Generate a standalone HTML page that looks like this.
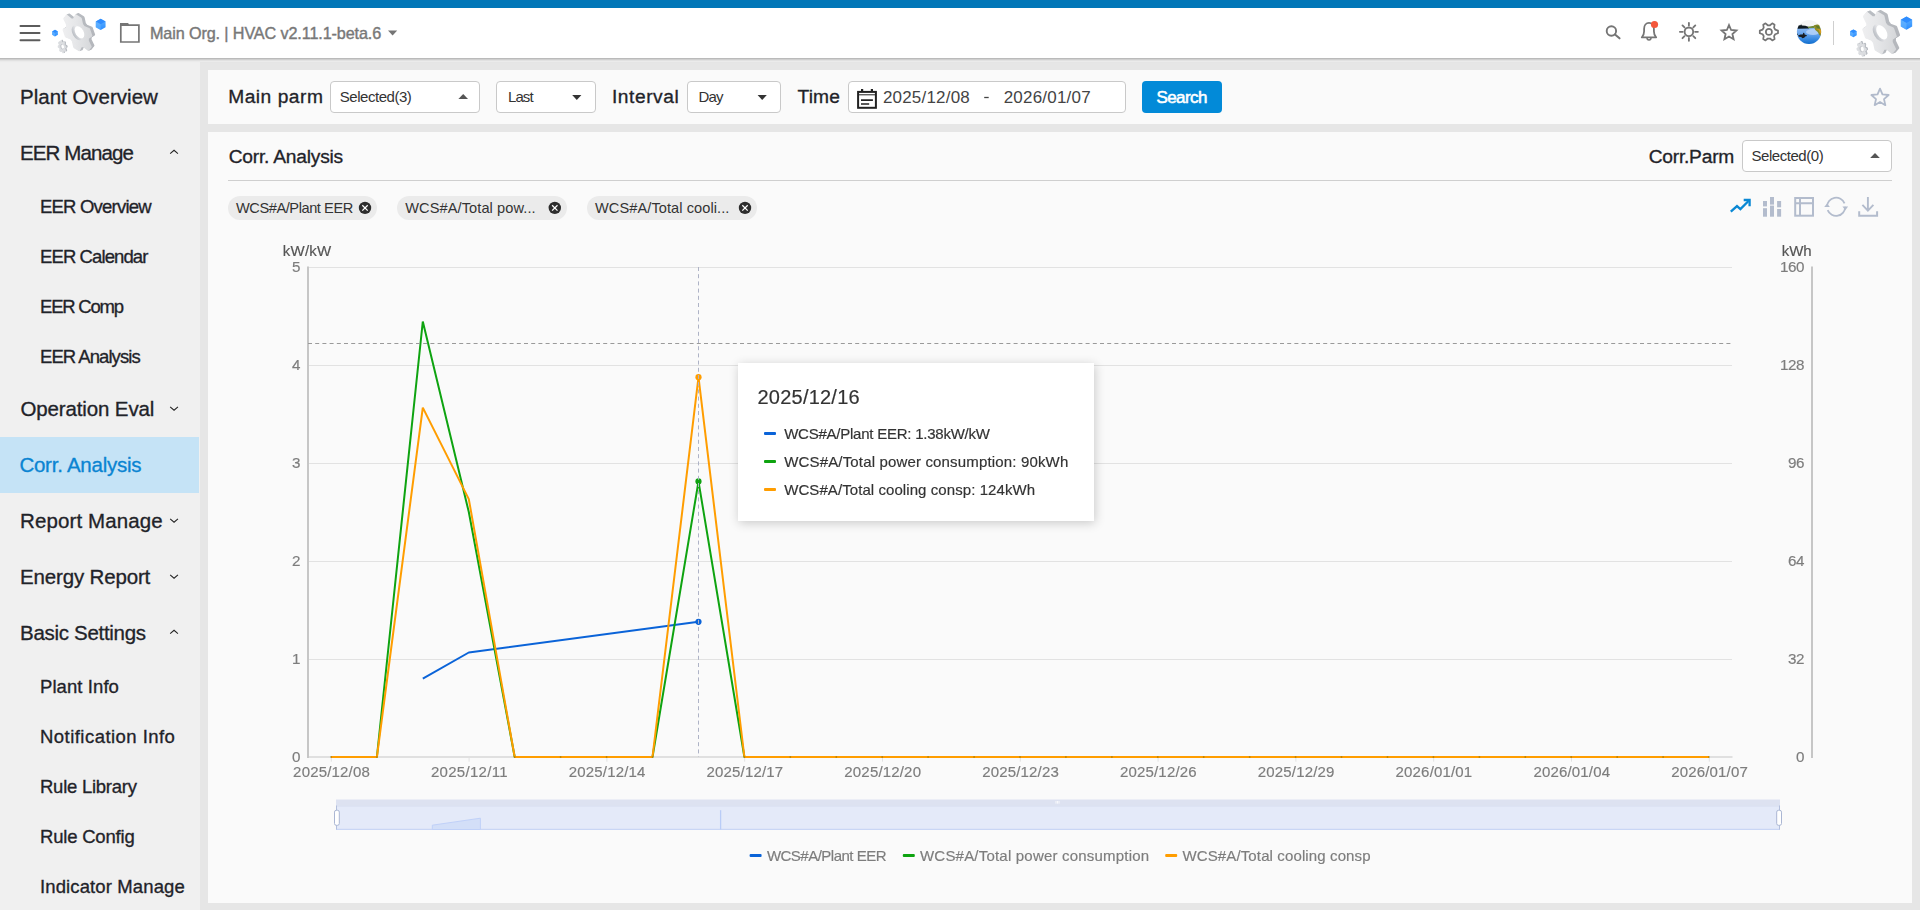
<!DOCTYPE html>
<html lang="en"><head><meta charset="utf-8"><title>HVAC - Corr. Analysis</title>
<style>
*{box-sizing:border-box;margin:0;padding:0}
html,body{width:1920px;height:910px;overflow:hidden}
body{position:relative;background:#f0f0f0;font-family:"Liberation Sans",sans-serif}
.a{position:absolute}
.t{position:absolute;white-space:pre;line-height:1;font-family:"Liberation Sans",sans-serif}
#topbar{left:0;top:0;width:1920px;height:8px;background:#0277b8}
#header{left:-10px;top:8px;width:1940px;height:50px;background:#fff;box-shadow:0 1px 3px rgba(0,0,0,.36)}
#sidebar{left:0;top:60px;width:200px;height:850px;background:#f0f0f0}
#main{left:200px;top:62px;width:1720px;height:848px;background:#e6e6e6}
#sel{left:0;top:437px;width:199px;height:56px;background:#c5e3f6}
.panel{background:#fafafa}
#filter{left:208px;top:70px;width:1704px;height:54px}
#chartp{left:208px;top:132px;width:1704px;height:771px}
.box{background:#fff;border:1px solid #c9c9c9;border-radius:4px}
#btn{left:1142px;top:81px;width:80px;height:32px;background:#028ad8;border-radius:4px}
#hr{left:228px;top:180px;width:1664px;height:1px;background:#cfcfcf}
.chip{height:24px;top:196px;border-radius:12px;background:#ebebeb}
#tip{left:738px;top:363px;width:356px;height:158px;background:#fff;box-shadow:1px 2px 10px rgba(0,0,0,.2)}
svg{position:absolute;overflow:visible}
#ctexts{position:absolute;left:0;top:0;width:1920px;height:910px;will-change:transform;pointer-events:none}

</style></head>
<body>
<div class="a" id="sidebar"></div>
<div class="a" id="main"></div>
<div class="a" id="sel"></div>
<div class="a" id="header"></div>
<div class="a" id="topbar"></div>
<div class="a panel" id="filter"></div>
<div class="a panel" id="chartp"></div>
<svg style="left:0;top:0" width="1920" height="62" viewBox="0 0 1920 62" fill="none">
<defs>
<linearGradient id="gg" x1="0" y1="0" x2="1" y2="1"><stop offset="0" stop-color="#f3f3f4"/><stop offset=".45" stop-color="#e6e7e9"/><stop offset="1" stop-color="#cfd1d4"/></linearGradient>
<linearGradient id="gs" x1="0" y1="0" x2="1" y2="1"><stop offset="0" stop-color="#bcc1c6"/><stop offset="1" stop-color="#b3b5ba"/></linearGradient>
<linearGradient id="gw" x1="0" y1="0" x2="1" y2="0"><stop offset="0" stop-color="#b9bdc3"/><stop offset=".6" stop-color="#e4e5e8"/><stop offset="1" stop-color="#f4f4f5"/></linearGradient>
<linearGradient id="wat" x1="0" y1="0" x2="0" y2="1"><stop offset="0" stop-color="#8dbaf3"/><stop offset=".35" stop-color="#6aa6ee"/><stop offset=".7" stop-color="#2f84de"/><stop offset="1" stop-color="#0565c6"/></linearGradient>
<linearGradient id="cb" x1="0" y1="0" x2="0" y2="1"><stop offset="0" stop-color="#63b4ff"/><stop offset="1" stop-color="#2a8cff"/></linearGradient>
<clipPath id="avc"><circle cx="1809" cy="32" r="12.100"/></clipPath>
</defs>
<g stroke="#5c5c5c" stroke-width="2" stroke-linecap="round"><path d="M20.500 26H39.500M20.500 33.100H39.500M20.500 40.200H39.500"/></g>
<g transform="translate(78.5 32) scale(0.86)">
<g transform="translate(-1.200 0.900)">
<g transform="translate(3.20 -1.40) matrix(0.530 -0.300 0.500 0.866 0 0)"><path d="M16.98 -1.85 L23.23 2.85 L20.78 10.76 L12.97 11.11 L10.09 13.78 L9.15 21.54 L1.07 23.38 L-3.14 16.79 L-6.89 15.63 L-14.08 18.69 L-19.71 12.61 L-16.11 5.68 L-16.98 1.85 L-23.23 -2.85 L-20.78 -10.76 L-12.97 -11.11 L-10.09 -13.78 L-9.15 -21.54 L-1.07 -23.38 L3.14 -16.79 L6.89 -15.63 L14.08 -18.69 L19.71 -12.61 L16.11 -5.68Z" fill="url(#gs)" stroke="url(#gs)" stroke-width="2.600" stroke-linejoin="round"/></g>
<g transform="translate(2.40 -1.05) matrix(0.530 -0.300 0.500 0.866 0 0)"><path d="M16.98 -1.85 L23.23 2.85 L20.78 10.76 L12.97 11.11 L10.09 13.78 L9.15 21.54 L1.07 23.38 L-3.14 16.79 L-6.89 15.63 L-14.08 18.69 L-19.71 12.61 L-16.11 5.68 L-16.98 1.85 L-23.23 -2.85 L-20.78 -10.76 L-12.97 -11.11 L-10.09 -13.78 L-9.15 -21.54 L-1.07 -23.38 L3.14 -16.79 L6.89 -15.63 L14.08 -18.69 L19.71 -12.61 L16.11 -5.68Z" fill="url(#gs)" stroke="url(#gs)" stroke-width="2.600" stroke-linejoin="round"/></g>
<g transform="translate(1.60 -0.70) matrix(0.530 -0.300 0.500 0.866 0 0)"><path d="M16.98 -1.85 L23.23 2.85 L20.78 10.76 L12.97 11.11 L10.09 13.78 L9.15 21.54 L1.07 23.38 L-3.14 16.79 L-6.89 15.63 L-14.08 18.69 L-19.71 12.61 L-16.11 5.68 L-16.98 1.85 L-23.23 -2.85 L-20.78 -10.76 L-12.97 -11.11 L-10.09 -13.78 L-9.15 -21.54 L-1.07 -23.38 L3.14 -16.79 L6.89 -15.63 L14.08 -18.69 L19.71 -12.61 L16.11 -5.68Z" fill="url(#gs)" stroke="url(#gs)" stroke-width="2.600" stroke-linejoin="round"/></g>
<g transform="translate(0.80 -0.35) matrix(0.530 -0.300 0.500 0.866 0 0)"><path d="M16.98 -1.85 L23.23 2.85 L20.78 10.76 L12.97 11.11 L10.09 13.78 L9.15 21.54 L1.07 23.38 L-3.14 16.79 L-6.89 15.63 L-14.08 18.69 L-19.71 12.61 L-16.11 5.68 L-16.98 1.85 L-23.23 -2.85 L-20.78 -10.76 L-12.97 -11.11 L-10.09 -13.78 L-9.15 -21.54 L-1.07 -23.38 L3.14 -16.79 L6.89 -15.63 L14.08 -18.69 L19.71 -12.61 L16.11 -5.68Z" fill="url(#gs)" stroke="url(#gs)" stroke-width="2.600" stroke-linejoin="round"/></g>
<g transform="matrix(0.530 -0.300 0.500 0.866 0 0)"><path d="M16.98 -1.85 L23.23 2.85 L20.78 10.76 L12.97 11.11 L10.09 13.78 L9.15 21.54 L1.07 23.38 L-3.14 16.79 L-6.89 15.63 L-14.08 18.69 L-19.71 12.61 L-16.11 5.68 L-16.98 1.85 L-23.23 -2.85 L-20.78 -10.76 L-12.97 -11.11 L-10.09 -13.78 L-9.15 -21.54 L-1.07 -23.38 L3.14 -16.79 L6.89 -15.63 L14.08 -18.69 L19.71 -12.61 L16.11 -5.68Z" fill="url(#gg)" stroke="url(#gg)" stroke-width="2.600" stroke-linejoin="round"/><circle r="9.36" fill="url(#gw)"/></g>
<g transform="translate(2.300 -0.600) matrix(0.530 -0.300 0.500 0.866 0 0)"><circle r="7.72" fill="#fff"/></g>
</g>
<g transform="translate(-19.100 17.200)"><g transform="translate(1.300 -0.500) matrix(0.660 -0.220 0.300 1.050 0 0)"><path d="M4.78 -0.45 L6.57 0.67 L6.31 1.94 L4.22 2.28 L3.70 3.06 L4.17 5.12 L3.09 5.83 L1.38 4.60 L0.45 4.78 L-0.67 6.57 L-1.94 6.31 L-2.28 4.22 L-3.06 3.70 L-5.12 4.17 L-5.83 3.09 L-4.60 1.38 L-4.78 0.45 L-6.57 -0.67 L-6.31 -1.94 L-4.22 -2.28 L-3.70 -3.06 L-4.17 -5.12 L-3.09 -5.83 L-1.38 -4.60 L-0.45 -4.78 L0.67 -6.57 L1.94 -6.31 L2.28 -4.22 L3.06 -3.70 L5.12 -4.17 L5.83 -3.09 L4.60 -1.38Z" fill="#b4b8be" stroke="#b4b8be" stroke-width="1" stroke-linejoin="round"/></g><g transform="matrix(0.660 -0.220 0.300 1.050 0 0)"><path d="M4.78 -0.45 L6.57 0.67 L6.31 1.94 L4.22 2.28 L3.70 3.06 L4.17 5.12 L3.09 5.83 L1.38 4.60 L0.45 4.78 L-0.67 6.57 L-1.94 6.31 L-2.28 4.22 L-3.06 3.70 L-5.12 4.17 L-5.83 3.09 L-4.60 1.38 L-4.78 0.45 L-6.57 -0.67 L-6.31 -1.94 L-4.22 -2.28 L-3.70 -3.06 L-4.17 -5.12 L-3.09 -5.83 L-1.38 -4.60 L-0.45 -4.78 L0.67 -6.57 L1.94 -6.31 L2.28 -4.22 L3.06 -3.70 L5.12 -4.17 L5.83 -3.09 L4.60 -1.38Z" fill="#dcdee1" stroke="#dcdee1" stroke-width="1" stroke-linejoin="round"/><circle r="2.900" fill="#c3c6cb"/></g><g transform="translate(.700 -.2) matrix(0.660 -0.220 0.300 1.050 0 0)"><circle r="2.200" fill="#fff"/></g></g>
<g transform="translate(-27.3 1.3)"><path d="M0 -3.9L3.35 -1.95V1.95L0 3.9L-3.35 1.95V-1.95Z" fill="url(#cb)"/><path d="M0 -3.9L3.35 -1.95L0 0L-3.35 -1.95Z" fill="#2f8dff"/><path d="M0 0V3.9L-3.35 1.95V-1.95Z" fill="#6cb8ff" opacity=".550"/></g>
<g transform="translate(25.8 -8.9)"><path d="M0 -6.6L5.68 -3.30V3.30L0 6.6L-5.68 3.30V-3.30Z" fill="url(#cb)"/><path d="M0 -6.6L5.68 -3.30L0 0L-5.68 -3.30Z" fill="#2f8dff"/><path d="M0 0V6.6L-5.68 3.30V-3.30Z" fill="#6cb8ff" opacity=".550"/></g>
</g>
<g transform="translate(1880.7 32) scale(1.0)">
<g transform="translate(-1.200 0.900)">
<g transform="translate(3.20 -1.40) matrix(0.530 -0.300 0.500 0.866 0 0)"><path d="M16.98 -1.85 L23.23 2.85 L20.78 10.76 L12.97 11.11 L10.09 13.78 L9.15 21.54 L1.07 23.38 L-3.14 16.79 L-6.89 15.63 L-14.08 18.69 L-19.71 12.61 L-16.11 5.68 L-16.98 1.85 L-23.23 -2.85 L-20.78 -10.76 L-12.97 -11.11 L-10.09 -13.78 L-9.15 -21.54 L-1.07 -23.38 L3.14 -16.79 L6.89 -15.63 L14.08 -18.69 L19.71 -12.61 L16.11 -5.68Z" fill="url(#gs)" stroke="url(#gs)" stroke-width="2.600" stroke-linejoin="round"/></g>
<g transform="translate(2.40 -1.05) matrix(0.530 -0.300 0.500 0.866 0 0)"><path d="M16.98 -1.85 L23.23 2.85 L20.78 10.76 L12.97 11.11 L10.09 13.78 L9.15 21.54 L1.07 23.38 L-3.14 16.79 L-6.89 15.63 L-14.08 18.69 L-19.71 12.61 L-16.11 5.68 L-16.98 1.85 L-23.23 -2.85 L-20.78 -10.76 L-12.97 -11.11 L-10.09 -13.78 L-9.15 -21.54 L-1.07 -23.38 L3.14 -16.79 L6.89 -15.63 L14.08 -18.69 L19.71 -12.61 L16.11 -5.68Z" fill="url(#gs)" stroke="url(#gs)" stroke-width="2.600" stroke-linejoin="round"/></g>
<g transform="translate(1.60 -0.70) matrix(0.530 -0.300 0.500 0.866 0 0)"><path d="M16.98 -1.85 L23.23 2.85 L20.78 10.76 L12.97 11.11 L10.09 13.78 L9.15 21.54 L1.07 23.38 L-3.14 16.79 L-6.89 15.63 L-14.08 18.69 L-19.71 12.61 L-16.11 5.68 L-16.98 1.85 L-23.23 -2.85 L-20.78 -10.76 L-12.97 -11.11 L-10.09 -13.78 L-9.15 -21.54 L-1.07 -23.38 L3.14 -16.79 L6.89 -15.63 L14.08 -18.69 L19.71 -12.61 L16.11 -5.68Z" fill="url(#gs)" stroke="url(#gs)" stroke-width="2.600" stroke-linejoin="round"/></g>
<g transform="translate(0.80 -0.35) matrix(0.530 -0.300 0.500 0.866 0 0)"><path d="M16.98 -1.85 L23.23 2.85 L20.78 10.76 L12.97 11.11 L10.09 13.78 L9.15 21.54 L1.07 23.38 L-3.14 16.79 L-6.89 15.63 L-14.08 18.69 L-19.71 12.61 L-16.11 5.68 L-16.98 1.85 L-23.23 -2.85 L-20.78 -10.76 L-12.97 -11.11 L-10.09 -13.78 L-9.15 -21.54 L-1.07 -23.38 L3.14 -16.79 L6.89 -15.63 L14.08 -18.69 L19.71 -12.61 L16.11 -5.68Z" fill="url(#gs)" stroke="url(#gs)" stroke-width="2.600" stroke-linejoin="round"/></g>
<g transform="matrix(0.530 -0.300 0.500 0.866 0 0)"><path d="M16.98 -1.85 L23.23 2.85 L20.78 10.76 L12.97 11.11 L10.09 13.78 L9.15 21.54 L1.07 23.38 L-3.14 16.79 L-6.89 15.63 L-14.08 18.69 L-19.71 12.61 L-16.11 5.68 L-16.98 1.85 L-23.23 -2.85 L-20.78 -10.76 L-12.97 -11.11 L-10.09 -13.78 L-9.15 -21.54 L-1.07 -23.38 L3.14 -16.79 L6.89 -15.63 L14.08 -18.69 L19.71 -12.61 L16.11 -5.68Z" fill="url(#gg)" stroke="url(#gg)" stroke-width="2.600" stroke-linejoin="round"/><circle r="9.36" fill="url(#gw)"/></g>
<g transform="translate(2.300 -0.600) matrix(0.530 -0.300 0.500 0.866 0 0)"><circle r="7.72" fill="#fff"/></g>
</g>
<g transform="translate(-19.100 17.200)"><g transform="translate(1.300 -0.500) matrix(0.660 -0.220 0.300 1.050 0 0)"><path d="M4.78 -0.45 L6.57 0.67 L6.31 1.94 L4.22 2.28 L3.70 3.06 L4.17 5.12 L3.09 5.83 L1.38 4.60 L0.45 4.78 L-0.67 6.57 L-1.94 6.31 L-2.28 4.22 L-3.06 3.70 L-5.12 4.17 L-5.83 3.09 L-4.60 1.38 L-4.78 0.45 L-6.57 -0.67 L-6.31 -1.94 L-4.22 -2.28 L-3.70 -3.06 L-4.17 -5.12 L-3.09 -5.83 L-1.38 -4.60 L-0.45 -4.78 L0.67 -6.57 L1.94 -6.31 L2.28 -4.22 L3.06 -3.70 L5.12 -4.17 L5.83 -3.09 L4.60 -1.38Z" fill="#b4b8be" stroke="#b4b8be" stroke-width="1" stroke-linejoin="round"/></g><g transform="matrix(0.660 -0.220 0.300 1.050 0 0)"><path d="M4.78 -0.45 L6.57 0.67 L6.31 1.94 L4.22 2.28 L3.70 3.06 L4.17 5.12 L3.09 5.83 L1.38 4.60 L0.45 4.78 L-0.67 6.57 L-1.94 6.31 L-2.28 4.22 L-3.06 3.70 L-5.12 4.17 L-5.83 3.09 L-4.60 1.38 L-4.78 0.45 L-6.57 -0.67 L-6.31 -1.94 L-4.22 -2.28 L-3.70 -3.06 L-4.17 -5.12 L-3.09 -5.83 L-1.38 -4.60 L-0.45 -4.78 L0.67 -6.57 L1.94 -6.31 L2.28 -4.22 L3.06 -3.70 L5.12 -4.17 L5.83 -3.09 L4.60 -1.38Z" fill="#dcdee1" stroke="#dcdee1" stroke-width="1" stroke-linejoin="round"/><circle r="2.900" fill="#c3c6cb"/></g><g transform="translate(.700 -.2) matrix(0.660 -0.220 0.300 1.050 0 0)"><circle r="2.200" fill="#fff"/></g></g>
<g transform="translate(-27.3 1.3)"><path d="M0 -3.9L3.35 -1.95V1.95L0 3.9L-3.35 1.95V-1.95Z" fill="url(#cb)"/><path d="M0 -3.9L3.35 -1.95L0 0L-3.35 -1.95Z" fill="#2f8dff"/><path d="M0 0V3.9L-3.35 1.95V-1.95Z" fill="#6cb8ff" opacity=".550"/></g>
<g transform="translate(25.8 -8.9)"><path d="M0 -6.6L5.68 -3.30V3.30L0 6.6L-5.68 3.30V-3.30Z" fill="url(#cb)"/><path d="M0 -6.6L5.68 -3.30L0 0L-5.68 -3.30Z" fill="#2f8dff"/><path d="M0 0V6.6L-5.68 3.30V-3.30Z" fill="#6cb8ff" opacity=".550"/></g>
</g>
<path d="M120.800 25.200H138.900V42H120.800Z" stroke="#757575" stroke-width="1.700"/><path d="M120 23.100h8.200l1.300 2.900H120z" fill="#757575"/>
<path d="M388 30.600h9.200l-4.600 5z" fill="#757575"/>
<circle cx="1611.400" cy="31" r="4.700" stroke="#757575" stroke-width="1.900"/><path d="M1615 34.500l4.500 3.800" stroke="#757575" stroke-width="2.100" stroke-linecap="round"/>
<path d="M1641.800 37.300h14.400c-1.700-1.500-2.300-3.200-2.300-6v-2.500c0-3.500-2-6-4.900-6s-4.900 2.500-4.900 6v2.500c0 2.800-.6 4.500-2.300 6z" stroke="#757575" stroke-width="1.800" stroke-linejoin="round"/><path d="M1647 38.100a2 1.800 0 0 0 4 0" stroke="#757575" stroke-width="1.500"/><circle cx="1654.500" cy="24.500" r="3.600" fill="#f4573b"/>
<g stroke="#757575" stroke-width="1.850" stroke-linecap="round"><circle cx="1688.900" cy="31.800" r="4.300"/><path d="M1688.900 22.800v2.800M1688.900 38v2.800M1679.900 31.800h2.800M1695.100 31.800h2.800M1682.500 25.400l2 2M1693.300 36.200l2 2M1682.500 38.200l2-2M1693.300 27.400l2-2"/></g>
<path d="M1729.00 25.10 L1731.12 29.99 L1736.42 30.49 L1732.42 34.01 L1733.58 39.21 L1729.00 36.50 L1724.42 39.21 L1725.58 34.01 L1721.58 30.49 L1726.88 29.99Z" stroke="#757575" stroke-width="1.800" stroke-linejoin="miter" stroke-miterlimit="6"/>
<g transform="translate(1768.900 31.900)" stroke="#757575" stroke-width="1.750" stroke-linejoin="round"><path d="M6.28 -2.34 L9.10 -1.34 L9.10 1.34 L6.28 2.34 L5.16 4.27 L5.71 7.21 L3.39 8.55 L1.12 6.61 L-1.12 6.61 L-3.39 8.55 L-5.71 7.21 L-5.16 4.27 L-6.28 2.34 L-9.10 1.34 L-9.10 -1.34 L-6.28 -2.34 L-5.16 -4.27 L-5.71 -7.21 L-3.39 -8.55 L-1.12 -6.61 L1.12 -6.61 L3.39 -8.55 L5.71 -7.21 L5.16 -4.27Z"/><circle r="3.050"/></g>
<g clip-path="url(#avc)"><rect x="1796" y="19" width="26" height="27" fill="#f5f5f5"/>
<rect x="1796" y="27.500" width="26" height="18" fill="url(#wat)"/>
<ellipse cx="1813" cy="32" rx="7" ry="3" fill="#c4dbfb" opacity=".7"/>
<path d="M1797 25.600l3.500-.3 .6-1 .8 1.100 3.500.4 3.500 1.200 0 1.500-11.600.300z" fill="#0f1a20"/>
<path d="M1808 26.800l6-1 0 2.300-6 .2z" fill="#6f8a3a"/>
<path d="M1814 25.200l3-.7 5 .2v12l-2.500-1.500-1.800-3.200-2.400-2-1.300-3z" fill="#8b8a25"/>
<path d="M1816 29l2.500 1 1.500 3 2 1.500v-5z" fill="#d69a1c"/>
<path d="M1815.500 25.500l3.500.5 1 2.500-3-.5z" fill="#5d7a2c"/>
<path d="M1798 35.500l2.500-.9 2.200-.2 .6-1.600 1 .1 .3 1.500 1.800.7.600.8-1.800.6-1 1.300-1.800.4-1.200-1.200-2.400-.2z" fill="#1a1d22"/>
<path d="M1796.800 33.500l.9.200.2 1.300-1.100-.2z" fill="#2a2d22"/></g>
<path d="M1833.500 21v24" stroke="#cfcfcf" stroke-width="1"/>
</svg>
<svg style="left:0;top:60px" width="200" height="850" viewBox="0 60 200 850" fill="none" stroke="#222" stroke-width="1.050">
<path d="M170.15 153.70L174.05 150.30L177.95 153.70"/>
<path d="M170.15 406.80L174.05 410.20L177.95 406.80"/>
<path d="M170.15 518.80L174.05 522.20L177.95 518.80"/>
<path d="M170.15 574.80L174.05 578.20L177.95 574.80"/>
<path d="M170.15 633.70L174.05 630.30L177.95 633.70"/>
</svg>
<div class="a box" style="left:330px;top:81px;width:150px;height:32px"></div>
<div class="a box" style="left:496px;top:81px;width:100px;height:32px"></div>
<div class="a box" style="left:687px;top:81px;width:94px;height:32px"></div>
<div class="a box" style="left:848px;top:81px;width:278px;height:32px"></div>
<div class="a" id="btn"></div>
<div class="a box" style="left:1742px;top:140px;width:150px;height:32px"></div>
<div class="a" id="hr"></div>
<svg style="left:0;top:0" width="1920" height="240" viewBox="0 0 1920 240" fill="none">
<path d="M458.4 99.1L463.2 94.1L468.0 99.1Z" fill="#555"/>
<path d="M572.1999999999999 95.0L576.8 100.0L581.4 95.0Z" fill="#333"/>
<path d="M757.6 95.0L762.2 100.0L766.8000000000001 95.0Z" fill="#333"/>
<path d="M1870.2 157.9L1875 152.9L1879.8 157.9Z" fill="#555"/>
<g stroke="#222"><rect x="858.100" y="91.900" width="17.800" height="15.900" stroke-width="2"/><path d="M862.100 88.900v2.500M871.900 88.900v2.500" stroke-width="2.200"/><path d="M858 94.800h18" stroke-width="1"/><path d="M861 100.100h11.900M861 104h8.200" stroke-width="1.700"/></g><path d="M984.200 97.500h4.500" stroke="#444" stroke-width="1.300"/>
<path d="M1880.00 88.70 L1882.47 94.40 L1888.65 94.99 L1883.99 99.10 L1885.35 105.16 L1880.00 102.00 L1874.65 105.16 L1876.01 99.10 L1871.35 94.99 L1877.53 94.40Z" stroke="#b1bacb" stroke-width="1.800" stroke-linejoin="round"/>
</svg>
<div class="a chip" style="left:228.3px;width:148.4px"></div>
<div class="a chip" style="left:397px;width:169.7px"></div>
<div class="a chip" style="left:586.7px;width:170.6px"></div>
<svg style="left:0;top:190px" width="1920" height="40" viewBox="0 190 1920 40" fill="none">
<circle cx="365" cy="207.900" r="6.200" fill="#2d2d2d"/><path d="M362.3 205.20000000000002l5.400 5.400M367.7 205.20000000000002l-5.400 5.400" stroke="#fff" stroke-width="1.250"/>
<circle cx="554.8" cy="207.900" r="6.200" fill="#2d2d2d"/><path d="M552.0999999999999 205.20000000000002l5.400 5.400M557.5 205.20000000000002l-5.400 5.400" stroke="#fff" stroke-width="1.250"/>
<circle cx="745" cy="207.900" r="6.200" fill="#2d2d2d"/><path d="M742.3 205.20000000000002l5.400 5.400M747.7 205.20000000000002l-5.400 5.400" stroke="#fff" stroke-width="1.250"/>
<path d="M1730.800 211.700L1737 206.100L1740.400 209.100L1748.500 201" stroke="#0a88d4" stroke-width="2.300" stroke-linejoin="miter"/><path d="M1743.700 200h5.900v6.300" stroke="#0a88d4" stroke-width="2.300"/>
<g fill="#b3bccd"><rect x="1763" y="201" width="4" height="5.400"/><rect x="1763" y="208.200" width="4" height="8.500"/><rect x="1770" y="197" width="4" height="7.600"/><rect x="1770" y="205.600" width="4" height="11.100"/><rect x="1777.100" y="201" width="4" height="6.300"/><rect x="1777.100" y="209" width="4" height="7.700"/></g>
<g stroke="#b3bccd" stroke-width="2"><rect x="1795.200" y="198" width="17.800" height="17.700"/><path d="M1795 203.300h18M1800 198v17.700"/></g>
<g stroke="#b3bccd" stroke-width="1.800"><path d="M1827.00 206.80A9.1 9.1 0 0 1 1844.54 203.39"/><path d="M1845.20 206.80A9.1 9.1 0 0 1 1827.66 210.21"/></g><path d="M1824.200 207l2.800-3.600 2.900 3.600z" fill="#b3bccd"/><path d="M1842.400 206.600l2.900 3.700 2.800-3.700z" fill="#b3bccd"/>
<g stroke="#b3bccd" stroke-width="1.900"><path d="M1867.900 197v13.200M1862.400 204.900l5.500 5.700 5.500-5.700"/></g><path d="M1859.200 211.300v4.400h17.900v-4.400" stroke="#b3bccd" stroke-width="2"/>
</svg>
<svg style="left:0;top:230px" width="1920" height="680" viewBox="0 230 1920 680" fill="none">
<path d="M308 267.5H1732" stroke="#e2e2e2" stroke-width="1"/>
<path d="M308 365.5H1732" stroke="#e2e2e2" stroke-width="1"/>
<path d="M308 463.5H1732" stroke="#e2e2e2" stroke-width="1"/>
<path d="M308 561.5H1732" stroke="#e2e2e2" stroke-width="1"/>
<path d="M308 659.5H1732" stroke="#e2e2e2" stroke-width="1"/>
<path d="M307 757H1732.500" stroke="#e0e0e0" stroke-width="2"/>
<path d="M331.3 758v3.700 M469.1 758v3.700 M606.9 758v3.700 M744.7 758v3.700 M882.5 758v3.700 M1020.3 758v3.700 M1158.1 758v3.700 M1295.9 758v3.700 M1433.7 758v3.700 M1571.5 758v3.700 M1709.3 758v3.700" stroke="#e2e2e2" stroke-width="1"/>
<path d="M308 266.500V758" stroke="#c6c6c6" stroke-width="2"/>
<path d="M1812 266.500V758" stroke="#c6c6c6" stroke-width="2"/>
<path d="M422.8 678.6 L468.8 652.5 L698.5 621.8" stroke="#0a63d8" stroke-width="2" stroke-linejoin="bevel"/>
<path d="M331.0 757.0 L376.9 757.0 L422.8 321.5 L468.8 512.0 L514.7 757.0 L560.6 757.0 L606.6 757.0 L652.5 757.0 L698.5 481.4 L744.4 757.0 L790.3 757.0 L836.3 757.0 L882.2 757.0 L928.1 757.0 L974.1 757.0 L1020.0 757.0 L1065.9 757.0 L1111.9 757.0 L1157.8 757.0 L1203.7 757.0 L1249.7 757.0 L1295.6 757.0 L1341.5 757.0 L1387.5 757.0 L1433.4 757.0 L1479.4 757.0 L1525.3 757.0 L1571.2 757.0 L1617.2 757.0 L1663.1 757.0 L1709.0 757.0" stroke="#0ea310" stroke-width="2" stroke-linejoin="bevel"/>
<path d="M331.0 757.0 L376.9 757.0 L422.8 407.6 L468.8 499.1 L514.7 757.0 L560.6 757.0 L606.6 757.0 L652.5 757.0 L698.5 377.2 L744.4 757.0 L790.3 757.0 L836.3 757.0 L882.2 757.0 L928.1 757.0 L974.1 757.0 L1020.0 757.0 L1065.9 757.0 L1111.9 757.0 L1157.8 757.0 L1203.7 757.0 L1249.7 757.0 L1295.6 757.0 L1341.5 757.0 L1387.5 757.0 L1433.4 757.0 L1479.4 757.0 L1525.3 757.0 L1571.2 757.0 L1617.2 757.0 L1663.1 757.0 L1709.0 757.0" stroke="#ff9d00" stroke-width="2" stroke-linejoin="bevel"/>
<g fill="#7d6a00" opacity=".5"><circle cx="331.0" cy="757" r="0.900"/><circle cx="376.9" cy="757" r="0.900"/><circle cx="514.7" cy="757" r="0.900"/><circle cx="560.6" cy="757" r="0.900"/><circle cx="606.6" cy="757" r="0.900"/><circle cx="652.5" cy="757" r="0.900"/><circle cx="744.4" cy="757" r="0.900"/><circle cx="790.3" cy="757" r="0.900"/><circle cx="836.3" cy="757" r="0.900"/><circle cx="882.2" cy="757" r="0.900"/><circle cx="928.1" cy="757" r="0.900"/><circle cx="974.1" cy="757" r="0.900"/><circle cx="1020.0" cy="757" r="0.900"/><circle cx="1065.9" cy="757" r="0.900"/><circle cx="1111.9" cy="757" r="0.900"/><circle cx="1157.8" cy="757" r="0.900"/><circle cx="1203.7" cy="757" r="0.900"/><circle cx="1249.7" cy="757" r="0.900"/><circle cx="1295.6" cy="757" r="0.900"/><circle cx="1341.5" cy="757" r="0.900"/><circle cx="1387.5" cy="757" r="0.900"/><circle cx="1433.4" cy="757" r="0.900"/><circle cx="1479.4" cy="757" r="0.900"/><circle cx="1525.3" cy="757" r="0.900"/><circle cx="1571.2" cy="757" r="0.900"/><circle cx="1617.2" cy="757" r="0.900"/><circle cx="1663.1" cy="757" r="0.900"/><circle cx="1709.0" cy="757" r="0.900"/></g>
<circle cx="698.5" cy="621.8" r="3.100" fill="#0a63d8"/>
<circle cx="698.5" cy="481.4" r="3.100" fill="#0ea310"/>
<circle cx="698.5" cy="377.2" r="3.100" fill="#ff9d00"/>
<path d="M308 343.500H1732" stroke="#9a9a9a" stroke-width="1" stroke-dasharray="4 3.200"/>
<path d="M698.500 267V757" stroke="#aeb3c6" stroke-width="1" stroke-dasharray="4 3.200"/>
<rect x="336" y="799.500" width="1444" height="6.300" fill="#dde2f1"/>
<rect x="336" y="805.800" width="1444" height="24" fill="#e4eaf9"/>
<path d="M336 829.300H1780" stroke="#c9d6f5" stroke-width="1.200"/><path d="M336 806H1780" stroke="#d6dcef" stroke-width="1"/>
<path d="M432.3 829.500V825.200L480.4 818.200V829.500Z" fill="#d3dff8" stroke="#c0d1f8" stroke-width="1"/>
<path d="M720.6 810.200V829.500" stroke="#b9ccf7" stroke-width="1.300"/>
<path d="M336.500 805.500V829.500M1779.500 805.500V829.500" stroke="#b3bfdc" stroke-width="1"/>
<rect x="334.500" y="810.300" width="4.800" height="15" rx="1.800" fill="#fff" stroke="#aab6d3" stroke-width="1"/>
<rect x="1776.700" y="810.300" width="4.800" height="15" rx="1.800" fill="#fff" stroke="#aab6d3" stroke-width="1"/>
<path d="M1056 801v2.600M1057.500 801v2.600M1059 801v2.600" stroke="#fff" stroke-width=".8"/>
<rect x="749.600" y="854" width="12" height="3" rx="1" fill="#0a63d8"/><rect x="902.800" y="854" width="12" height="3" rx="1" fill="#0ea310"/><rect x="1165.200" y="854" width="12" height="3" rx="1" fill="#ff9d00"/>
</svg>
<div class="a" id="tip"></div>
<svg style="left:738px;top:363px" width="356" height="158" viewBox="738 363 356 158"><rect x="764" y="432" width="12" height="3" rx="1" fill="#0a63d8"/><rect x="764" y="460" width="12" height="3" rx="1" fill="#0ea310"/><rect x="764" y="488" width="12" height="3" rx="1" fill="#ff9d00"/></svg>
<div id="texts">
<span class="t" id="t0" style="font-size:20.5px;top:87px;color:#1f2329;left:20.00px;-webkit-text-stroke:0.32px #1f2329;">Plant Overview</span>
<span class="t" id="t1" style="font-size:20.5px;top:143px;color:#1f2329;letter-spacing:-0.892px;left:20.00px;-webkit-text-stroke:0.32px #1f2329;">EER Manage</span>
<span class="t" id="t2" style="font-size:20.5px;top:399px;color:#1f2329;letter-spacing:-0.127px;left:20.40px;-webkit-text-stroke:0.32px #1f2329;">Operation Eval</span>
<span class="t" id="t3" style="font-size:20.5px;top:455px;color:#0a84d2;letter-spacing:-0.246px;left:19.40px;-webkit-text-stroke:0.32px #0a84d2;">Corr. Analysis</span>
<span class="t" id="t4" style="font-size:20.5px;top:511px;color:#1f2329;letter-spacing:0.116px;left:20.00px;-webkit-text-stroke:0.32px #1f2329;">Report Manage</span>
<span class="t" id="t5" style="font-size:20.5px;top:567px;color:#1f2329;letter-spacing:-0.157px;left:20.00px;-webkit-text-stroke:0.32px #1f2329;">Energy Report</span>
<span class="t" id="t6" style="font-size:20.5px;top:623px;color:#1f2329;letter-spacing:-0.296px;left:20.00px;-webkit-text-stroke:0.32px #1f2329;">Basic Settings</span>
<span class="t" id="t7" style="font-size:18.5px;top:198px;color:#1f2329;letter-spacing:-0.792px;left:40.00px;-webkit-text-stroke:0.32px #1f2329;">EER Overview</span>
<span class="t" id="t8" style="font-size:18.5px;top:248px;color:#1f2329;letter-spacing:-0.899px;left:40.00px;-webkit-text-stroke:0.32px #1f2329;">EER Calendar</span>
<span class="t" id="t9" style="font-size:18.5px;top:298px;color:#1f2329;letter-spacing:-1.205px;left:40.00px;-webkit-text-stroke:0.32px #1f2329;">EER Comp</span>
<span class="t" id="t10" style="font-size:18.5px;top:348px;color:#1f2329;letter-spacing:-0.947px;left:40.00px;-webkit-text-stroke:0.32px #1f2329;">EER Analysis</span>
<span class="t" id="t11" style="font-size:18.5px;top:678px;color:#1f2329;letter-spacing:0.081px;left:40.00px;-webkit-text-stroke:0.32px #1f2329;">Plant Info</span>
<span class="t" id="t12" style="font-size:18.5px;top:728px;color:#1f2329;letter-spacing:0.461px;left:40.00px;-webkit-text-stroke:0.32px #1f2329;">Notification Info</span>
<span class="t" id="t13" style="font-size:18.5px;top:778px;color:#1f2329;letter-spacing:-0.253px;left:40.00px;-webkit-text-stroke:0.32px #1f2329;">Rule Library</span>
<span class="t" id="t14" style="font-size:18.5px;top:828px;color:#1f2329;letter-spacing:-0.198px;left:40.00px;-webkit-text-stroke:0.32px #1f2329;">Rule Config</span>
<span class="t" id="t15" style="font-size:18.5px;top:878px;color:#1f2329;letter-spacing:0.123px;left:40.00px;-webkit-text-stroke:0.32px #1f2329;">Indicator Manage</span>
<span class="t" id="t16" style="font-size:16.2px;top:25px;color:#787878;letter-spacing:-0.121px;left:150.00px;-webkit-text-stroke:0.4px #787878;">Main Org. | HVAC v2.11.1-beta.6</span>
<span class="t" id="t17" style="font-size:19.2px;top:87px;color:#1f2329;letter-spacing:0.506px;left:228.20px;-webkit-text-stroke:0.32px #1f2329;">Main parm</span>
<span class="t" id="t18" style="font-size:15px;top:89px;color:#333;letter-spacing:-0.471px;left:339.80px;">Selected(3)</span>
<span class="t" id="t19" style="font-size:15px;top:89px;color:#333;letter-spacing:-0.928px;left:508.00px;">Last</span>
<span class="t" id="t20" style="font-size:19.2px;top:87px;color:#1f2329;letter-spacing:0.563px;left:611.90px;-webkit-text-stroke:0.32px #1f2329;">Interval</span>
<span class="t" id="t21" style="font-size:15px;top:89px;color:#333;letter-spacing:-0.787px;left:698.40px;">Day</span>
<span class="t" id="t22" style="font-size:19.2px;top:87px;color:#1f2329;letter-spacing:0.149px;left:797.50px;-webkit-text-stroke:0.32px #1f2329;">Time</span>
<span class="t" id="t23" style="font-size:17px;top:89px;color:#444;letter-spacing:0.197px;left:882.90px;">2025/12/08</span>
<span class="t" id="t24" style="font-size:17px;top:89px;color:#444;letter-spacing:0.208px;left:1003.70px;">2026/01/07</span>
<span class="t" id="t25" style="font-size:17px;top:89px;color:#fff;letter-spacing:-0.582px;left:1156.40px;-webkit-text-stroke:0.55px #fff;">Search</span>
<span class="t" id="t26" style="font-size:19.2px;top:147px;color:#1f2329;letter-spacing:-0.213px;left:228.70px;-webkit-text-stroke:0.32px #1f2329;">Corr. Analysis</span>
<span class="t" id="t27" style="font-size:19.2px;top:147px;color:#1f2329;letter-spacing:-0.230px;left:1648.70px;-webkit-text-stroke:0.32px #1f2329;">Corr.Parm</span>
<span class="t" id="t28" style="font-size:15px;top:148px;color:#333;letter-spacing:-0.451px;left:1751.50px;">Selected(0)</span>
<span class="t" id="t29" style="font-size:14.6px;top:201px;color:#333;letter-spacing:-0.431px;left:236.00px;">WCS#A/Plant EER</span>
<span class="t" id="t30" style="font-size:14.6px;top:201px;color:#333;letter-spacing:0.088px;left:405.20px;">WCS#A/Total pow...</span>
<span class="t" id="t31" style="font-size:14.6px;top:201px;color:#333;letter-spacing:0.071px;left:595.00px;">WCS#A/Total cooli...</span>
<div id="ctexts">
<span class="t" id="t32" style="font-size:15px;top:243px;color:#555;letter-spacing:0.219px;left:282.80px;-webkit-text-stroke:0.18px #555;">kW/kW</span>
<span class="t" id="t33" style="font-size:15px;top:243px;color:#555;letter-spacing:-0.129px;left:1781.80px;-webkit-text-stroke:0.18px #555;">kWh</span>
<span class="t" id="t34" style="font-size:15.2px;top:259px;color:#7d7d7d;left:291.90px;-webkit-text-stroke:0.18px #7d7d7d;">5</span>
<span class="t" id="t35" style="font-size:15.2px;top:357px;color:#7d7d7d;left:291.90px;-webkit-text-stroke:0.18px #7d7d7d;">4</span>
<span class="t" id="t36" style="font-size:15.2px;top:455px;color:#7d7d7d;left:291.90px;-webkit-text-stroke:0.18px #7d7d7d;">3</span>
<span class="t" id="t37" style="font-size:15.2px;top:553px;color:#7d7d7d;left:291.90px;-webkit-text-stroke:0.18px #7d7d7d;">2</span>
<span class="t" id="t38" style="font-size:15.2px;top:651px;color:#7d7d7d;left:291.90px;-webkit-text-stroke:0.18px #7d7d7d;">1</span>
<span class="t" id="t39" style="font-size:15.2px;top:749px;color:#7d7d7d;left:291.90px;-webkit-text-stroke:0.18px #7d7d7d;">0</span>
<span class="t" id="t40" style="font-size:15.2px;top:259px;color:#7d7d7d;letter-spacing:-0.447px;left:1779.90px;-webkit-text-stroke:0.18px #7d7d7d;">160</span>
<span class="t" id="t41" style="font-size:15.2px;top:357px;color:#7d7d7d;letter-spacing:-0.447px;left:1779.90px;-webkit-text-stroke:0.18px #7d7d7d;">128</span>
<span class="t" id="t42" style="font-size:15.2px;top:455px;color:#7d7d7d;letter-spacing:-0.447px;left:1787.90px;-webkit-text-stroke:0.18px #7d7d7d;">96</span>
<span class="t" id="t43" style="font-size:15.2px;top:553px;color:#7d7d7d;letter-spacing:-0.447px;left:1787.90px;-webkit-text-stroke:0.18px #7d7d7d;">64</span>
<span class="t" id="t44" style="font-size:15.2px;top:651px;color:#7d7d7d;letter-spacing:-0.447px;left:1787.90px;-webkit-text-stroke:0.18px #7d7d7d;">32</span>
<span class="t" id="t45" style="font-size:15.2px;top:749px;color:#7d7d7d;left:1795.90px;-webkit-text-stroke:0.18px #7d7d7d;">0</span>
<span class="t" id="t46" style="font-size:15px;top:764px;color:#7d7d7d;letter-spacing:0.174px;left:293.12px;-webkit-text-stroke:0.18px #7d7d7d;">2025/12/08</span>
<span class="t" id="t47" style="font-size:15px;top:764px;color:#7d7d7d;letter-spacing:0.298px;left:430.92px;-webkit-text-stroke:0.18px #7d7d7d;">2025/12/11</span>
<span class="t" id="t48" style="font-size:15px;top:764px;color:#7d7d7d;letter-spacing:0.174px;left:568.73px;-webkit-text-stroke:0.18px #7d7d7d;">2025/12/14</span>
<span class="t" id="t49" style="font-size:15px;top:764px;color:#7d7d7d;letter-spacing:0.174px;left:706.54px;-webkit-text-stroke:0.18px #7d7d7d;">2025/12/17</span>
<span class="t" id="t50" style="font-size:15px;top:764px;color:#7d7d7d;letter-spacing:0.174px;left:844.34px;-webkit-text-stroke:0.18px #7d7d7d;">2025/12/20</span>
<span class="t" id="t51" style="font-size:15px;top:764px;color:#7d7d7d;letter-spacing:0.174px;left:982.15px;-webkit-text-stroke:0.18px #7d7d7d;">2025/12/23</span>
<span class="t" id="t52" style="font-size:15px;top:764px;color:#7d7d7d;letter-spacing:0.174px;left:1119.96px;-webkit-text-stroke:0.18px #7d7d7d;">2025/12/26</span>
<span class="t" id="t53" style="font-size:15px;top:764px;color:#7d7d7d;letter-spacing:0.174px;left:1257.76px;-webkit-text-stroke:0.18px #7d7d7d;">2025/12/29</span>
<span class="t" id="t54" style="font-size:15px;top:764px;color:#7d7d7d;letter-spacing:0.174px;left:1395.57px;-webkit-text-stroke:0.18px #7d7d7d;">2026/01/01</span>
<span class="t" id="t55" style="font-size:15px;top:764px;color:#7d7d7d;letter-spacing:0.174px;left:1533.38px;-webkit-text-stroke:0.18px #7d7d7d;">2026/01/04</span>
<span class="t" id="t56" style="font-size:15px;top:764px;color:#7d7d7d;letter-spacing:0.174px;left:1671.18px;-webkit-text-stroke:0.18px #7d7d7d;">2026/01/07</span>
<span class="t" id="t57" style="font-size:20px;top:387px;color:#333;letter-spacing:0.225px;left:757.50px;-webkit-text-stroke:0.18px #333;">2025/12/16</span>
<span class="t" id="t58" style="font-size:15px;top:426px;color:#333;letter-spacing:-0.239px;left:784.20px;-webkit-text-stroke:0.18px #333;">WCS#A/Plant EER: 1.38kW/kW</span>
<span class="t" id="t59" style="font-size:15px;top:454px;color:#333;letter-spacing:0.160px;left:784.20px;-webkit-text-stroke:0.18px #333;">WCS#A/Total power consumption: 90kWh</span>
<span class="t" id="t60" style="font-size:15px;top:482px;color:#333;letter-spacing:0.075px;left:784.20px;-webkit-text-stroke:0.18px #333;">WCS#A/Total cooling consp: 124kWh</span>
<span class="t" id="t61" style="font-size:15px;top:848px;color:#7d7d7d;letter-spacing:-0.505px;left:766.90px;-webkit-text-stroke:0.18px #7d7d7d;">WCS#A/Plant EER</span>
<span class="t" id="t62" style="font-size:15px;top:848px;color:#7d7d7d;letter-spacing:0.204px;left:920.00px;-webkit-text-stroke:0.18px #7d7d7d;">WCS#A/Total power consumption</span>
<span class="t" id="t63" style="font-size:15px;top:848px;color:#7d7d7d;letter-spacing:0.123px;left:1182.50px;-webkit-text-stroke:0.18px #7d7d7d;">WCS#A/Total cooling consp</span>
</div>
</div>
</body></html>
